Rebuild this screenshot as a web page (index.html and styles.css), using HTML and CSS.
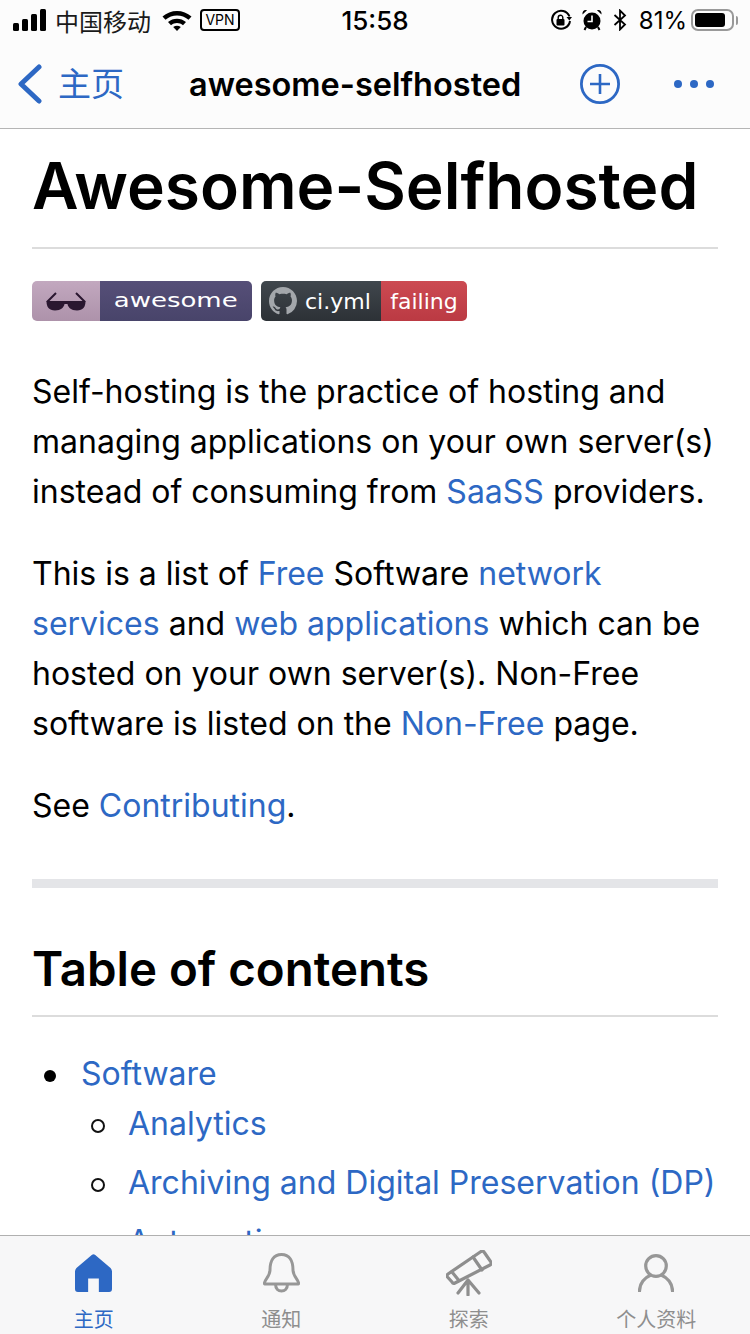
FILE: index.html
```html
<!DOCTYPE html>
<html lang="en">

<head>
    <meta charset="UTF-8">
    <meta name="viewport" content="width=device-width, initial-scale=1.0">
    <title>awesome-selfhosted</title>
    <link rel="stylesheet" href="styles.css">
</head>

<body>
    <div class="phone">
        <div class="status-bar">
            <div class="status-left">
                <svg class="signal" width="34" height="22" viewBox="0 0 34 22">
                    <rect x="0" y="14" width="6" height="8" rx="1.5" />
                    <rect x="9" y="10" width="6" height="12" rx="1.5" />
                    <rect x="18" y="5" width="6" height="17" rx="1.5" />
                    <rect x="27" y="0" width="6" height="22" rx="1.5" />
                </svg>
                <span class="carrier">中国移动</span>
                <svg class="wifi" width="30" height="22" viewBox="0 0 30 22">
                    <path d="M0.5 7.500C8.500 0 21.500 0 29.500 7.500L26.500 10.800C20 5 10 5 3.500 10.800Z" />
                    <path d="M6 13C11 8.500 19 8.500 24 13L21 16.200C17.500 13.200 12.500 13.200 9 16.200Z" />
                    <path d="M11.200 18C13.500 16.200 16.500 16.200 18.800 18L15 22Z" />
                </svg>
                <span class="vpn">VPN</span>
            </div>
            <div class="status-time">15:58</div>
            <div class="status-right">
                <svg class="icon-rotate" width="22" height="22" viewBox="0 0 22 22" fill="none" stroke="#000" stroke-width="2">
                    <path d="M19.500 7.500A9 9 0 1 0 20 12" />
                    <path d="M16.500 8h5.500l-2.700 3.500z" fill="#000" stroke="none" />
                    <rect x="6.500" y="10" width="8" height="6.500" rx="1" fill="#000" stroke="none" />
                    <path d="M8.200 10V8.500a2.300 2.300 0 0 1 4.600 0V10" stroke-width="1.400" />
                </svg>
                <svg class="icon-alarm" width="20" height="22" viewBox="0 0 20 22">
                    <circle cx="10" cy="12" r="8.500" />
                    <path d="M10 6.500V12.500H5.500" fill="none" stroke="#fff" stroke-width="1.600" />
                    <path d="M0.500 5.500L5 1.200C2.200 .2 0 2.500 .5 5.500ZM19.500 5.500L15 1.200C17.800 .2 20 2.500 19.500 5.500Z" />
                    <path d="M4 18L2.500 21M16 18L17.500 21" stroke="#000" stroke-width="2" />
                </svg>
                <svg class="icon-bluetooth" width="14" height="22" viewBox="0 0 14 22" fill="none" stroke="#000" stroke-width="1.800">
                    <path d="M1.500 6L12 15.500L7 20.500V1.500L12 6.500L1.500 16" />
                </svg>
                <span class="battery-pct">81%</span>
                <div class="battery">
                    <div class="battery-level"></div>
                </div>
                <div class="battery-cap"></div>
            </div>
        </div>

        <div class="nav-bar">
            <svg class="nav-back" width="26" height="40" viewBox="0 0 26 40" fill="none" stroke="#2d68c4" stroke-width="5" stroke-linecap="round" stroke-linejoin="round">
                <path d="M22 3L4 20L22 37" />
            </svg>
            <span class="nav-back-label">主页</span>
            <span class="nav-title">awesome-selfhosted</span>
            <svg class="nav-plus" width="40" height="40" viewBox="0 0 40 40" fill="none" stroke="#2d68c4">
                <circle cx="20" cy="20" r="18.600" stroke-width="2.800" />
                <path d="M20 10V30M10 20H30" stroke-width="2.600" />
            </svg>
            <div class="nav-more">
                <span></span>
                <span></span>
                <span></span>
            </div>
        </div>

        <div class="content">
            <h1>Awesome-Selfhosted</h1>
            <div class="badges">
                <div class="badge">
                    <span class="badge-glasses">
                        <svg width="40" height="20" viewBox="0 0 40 20" fill="#2a1730">
                            <path d="M0.500 10H39.500C39.500 16 37 19.500 31 19.500C25 19.500 22 16 21.500 13H18.500C18 16 15 19.500 9 19.500C3 19.500 .5 16 .5 10Z" />
                            <path d="M1 11L10 2M39 11L30 2" fill="none" stroke="#2a1730" stroke-width="2" />
                        </svg>
                    </span>
                    <span class="badge-awesome"><span class="awesome-text">awesome</span></span>
                </div>
                <div class="badge">
                    <span class="badge-ci">
                        <svg width="28" height="28" viewBox="0 0 16 16" fill="#a3a7ab">
                            <path d="M8 0C3.58 0 0 3.58 0 8c0 3.54 2.29 6.53 5.47 7.59.4.07.55-.17.55-.38 0-.19-.01-.82-.01-1.49-2.01.37-2.53-.49-2.69-.94-.09-.23-.48-.94-.82-1.13-.28-.15-.68-.52-.01-.53.63-.01 1.08.58 1.23.82.72 1.21 1.87.87 2.33.66.07-.52.28-.87.51-1.07-1.78-.2-3.64-.89-3.64-3.95 0-.87.31-1.59.82-2.15-.08-.2-.36-1.02.08-2.12 0 0 .67-.21 2.2.82.64-.18 1.32-.27 2-.27.68 0 1.36.09 2 .27 1.53-1.04 2.2-.82 2.2-.82.44 1.1.16 1.92.08 2.12.51.56.82 1.27.82 2.15 0 3.07-1.87 3.75-3.65 3.95.29.25.54.73.54 1.48 0 1.07-.01 1.93-.01 2.2 0 .21.15.46.55.38A8.013 8.013 0 0016 8c0-4.42-3.58-8-8-8z" />
                        </svg>
                        ci.yml
                    </span>
                    <span class="badge-failing">failing</span>
                </div>
            </div>
            <p>Self-hosting is the practice of hosting and managing applications on your own server(s) instead of consuming from <a href="#">SaaSS</a> providers.</p>
            <p>This is a list of <a href="#">Free</a> Software <a href="#">network services</a> and <a href="#">web applications</a> which can be hosted on your own server(s). Non-Free software is listed on the <a href="#">Non-Free</a> page.</p>
            <p>See <a href="#">Contributing</a>.</p>
            <hr>
            <h2>Table of contents</h2>
            <ul class="toc">
                <li><a href="#">Software</a>
                    <ul>
                        <li><a href="#">Analytics</a></li>
                        <li><a href="#">Archiving and Digital Preservation (DP)</a></li>
                        <li><a href="#">Automation</a></li>
                    </ul>
                </li>
            </ul>
        </div>

        <div class="tab-bar">
            <div class="tab tab-active">
                <div class="tab-icon tab-icon-home">
                    <svg width="37" height="38" viewBox="0 0 38 38" preserveAspectRatio="none" fill="#2d68c4">
                        <path d="M17.500 .8Q19 -.2 20.500 .8L36.500 14Q38 15.500 38 17.500V35Q38 38 35 38H24.500V24.500H13.500V38H3Q0 38 0 35V17.500Q0 15.500 1.500 14Z" />
                    </svg>
                </div>
                <span>主页</span>
            </div>
            <div class="tab">
                <div class="tab-icon">
                    <svg width="37" height="40" viewBox="0 0 37 40" fill="none" stroke="#979797" stroke-width="3" stroke-linejoin="round">
                        <path d="M7 17C7 8 10.500 1.500 18.500 1.500C26.500 1.500 30 8 30 17C30 24 36.500 27 35.500 31H1.500C.5 27 7 24 7 17Z" />
                        <path d="M12.500 31C12.500 36 15.500 38 18.500 38C21.500 38 24.500 36 24.500 31" />
                    </svg>
                </div>
                <span>通知</span>
            </div>
            <div class="tab">
                <div class="tab-icon">
                    <svg width="46" height="46" viewBox="0 0 46 46" fill="none" stroke="#8e8e8e" stroke-width="3.200" stroke-linejoin="round" stroke-linecap="round">
                        <path d="M2 24L35 1.500Q37 .5 38 2L45 12Q46 14 44 15L9 33Q7 34 6 32L1.500 27Q.5 25 2 24Z" />
                        <path d="M6 22L12.500 30M27 7L36 20" />
                        <path d="M22 30V45M22 30L12 43M22 30L33 43" />
                    </svg>
                </div>
                <span>探索</span>
            </div>
            <div class="tab">
                <div class="tab-icon">
                    <svg width="36" height="38" viewBox="0 0 36 38" fill="none" stroke="#979797" stroke-width="3.200" stroke-linecap="round">
                        <circle cx="18" cy="12" r="10.300" />
                        <path d="M1.500 37C1.500 29 7 23.500 12 21.500M34.500 37C34.500 29 29 23.500 24 21.500" />
                    </svg>
                </div>
                <span>个人资料</span>
            </div>
        </div>
    </div>
</body>

</html>
```

FILE: styles.css
```css
html,
body {
    margin: 0;
    padding: 0;
}

body {
    font-family: Inter, "Noto Sans CJK SC", sans-serif;
    color: #000;
    background-color: #fff;
}

.phone {
    width: 750px;
    height: 1334px;
    display: flex;
    flex-direction: column;
    overflow: hidden;
}

.status-bar {
    height: 40px;
    flex-shrink: 0;
    display: grid;
    grid-template-columns: 1fr auto 1fr;
    align-items: center;
    padding: 0 12px;
    background-color: #fcfcfc;
}

.status-left,
.status-right {
    display: flex;
    align-items: center;
}

.status-right {
    justify-content: flex-end;
}

.status-left svg {
    fill: #000;
}

.signal {
    margin-left: 1px;
}

.carrier {
    margin-left: 8px;
    font-size: 24px;
    color: #1a1a1a;
}

.wifi {
    margin-left: 11px;
}

.vpn {
    margin-left: 8px;
    width: 36px;
    height: 18px;
    line-height: 18px;
    border: 2px solid #000;
    border-radius: 4px;
    font-size: 14px;
    text-align: center;
}

.status-time {
    font-size: 26px;
    font-weight: 500;
}

.icon-alarm {
    margin-left: 10px;
}

.icon-bluetooth {
    margin-left: 11px;
}

.battery-pct {
    margin-left: 12px;
    font-size: 24px;
}

.battery {
    width: 35px;
    height: 14px;
    padding: 2px;
    margin-left: 4px;
    border: 2px solid #999;
    border-radius: 7px;
}

.battery-level {
    width: 30px;
    height: 14px;
    background-color: #000;
    border-radius: 3px;
}

.battery-cap {
    width: 2px;
    height: 9px;
    margin-left: 2px;
    background-color: #999;
    border-radius: 0 2px 2px 0;
}

.nav-bar {
    height: 88px;
    flex-shrink: 0;
    display: flex;
    align-items: center;
    background-color: #fcfcfc;
    border-bottom: 1px solid #b5b5b5;
}

.nav-back {
    margin-left: 17px;
}

.nav-back-label {
    margin: 0 0 4px 15px;
    font-size: 33px;
    color: #2d68c4;
}

.nav-title {
    margin-left: 65px;
    font-size: 32.500px;
    font-weight: 600;
}

.nav-plus {
    margin-left: 59px;
}

.nav-more {
    margin-left: 54px;
    display: flex;
    gap: 8px;
}

.nav-more span {
    width: 8px;
    height: 8px;
    border-radius: 50%;
    background-color: #2d68c4;
}

.content {
    flex: 1;
    min-height: 0;
    overflow: hidden;
    padding: 0 32px;
    font-size: 32px;
    line-height: 50px;
}

a {
    color: #2d68c4;
    text-decoration: none;
}

h1 {
    margin: 15px 0 32px;
    padding-bottom: 19px;
    border-bottom: 2px solid #dcdcdc;
    font-size: 64px;
    line-height: 84px;
    font-weight: 600;
}

h2 {
    margin: 51px 0 32px;
    padding-bottom: 16px;
    border-bottom: 2px solid #dcdcdc;
    font-size: 47.400px;
    line-height: 60px;
    font-weight: 600;
}

p {
    margin: 0 0 32px;
}

hr {
    height: 9px;
    margin: 48px 0 0;
    border: 0;
    background-color: #e4e5e8;
}

.badges {
    display: flex;
    gap: 9px;
    margin-bottom: 46px;
}

.badge {
    display: flex;
    height: 40px;
    border-radius: 5px;
    overflow: hidden;
    color: #fff;
}

.badge-glasses {
    width: 68px;
    display: flex;
    align-items: center;
    justify-content: center;
    background: linear-gradient(#c2a8bf, #ad92aa);
}

.badge-awesome {
    width: 152px;
    background: linear-gradient(#564f78, #48446a);
    font-family: "DejaVu Sans", sans-serif;
    font-size: 20px;
    line-height: 38px;
    text-align: center;
}

.awesome-text {
    display: inline-block;
    transform: scaleX(1.3);
}

.badge-ci {
    width: 120px;
    display: flex;
    align-items: center;
    gap: 8px;
    padding: 2px 0 0 8px;
    box-sizing: border-box;
    background: linear-gradient(#40474d, #2c3136);
    font-family: "DejaVu Sans", sans-serif;
    font-size: 22px;
}

.badge-ci svg {
    margin-bottom: 2px;
}

.badge-failing {
    width: 86px;
    background: linear-gradient(#cc4a52, #bb3a43);
    font-family: "DejaVu Sans", sans-serif;
    font-size: 22px;
    line-height: 42px;
    text-align: center;
}

.toc {
    margin: 0;
    padding-left: 49px;
    list-style: none;
}

.toc ul {
    margin: 0;
    padding-left: 47px;
    list-style: none;
}

.toc ul li {
    margin-bottom: 9px;
}

.toc > li::before {
    content: "";
    display: inline-block;
    width: 12px;
    height: 12px;
    margin: 0 25px 0 -37px;
    border-radius: 50%;
    background-color: #000;
    vertical-align: middle;
}

.toc ul li::before {
    content: "";
    display: inline-block;
    width: 14px;
    height: 14px;
    margin: 0 23px 0 -37px;
    box-sizing: border-box;
    border: 2.500px solid #111;
    border-radius: 50%;
    vertical-align: middle;
}

.tab-bar {
    height: 98px;
    flex-shrink: 0;
    display: grid;
    grid-template-columns: repeat(4, 1fr);
    background-color: #f7f7f8;
    border-top: 1px solid #b0b0b0;
}

.tab {
    display: flex;
    flex-direction: column;
    align-items: center;
    gap: 16px;
    padding-top: 18px;
    font-size: 20px;
    line-height: 24px;
    color: #8e8e8e;
}

.tab-icon {
    height: 38px;
    display: flex;
    align-items: center;
    justify-content: center;
}

.tab-icon-home {
    margin-right: 1px;
}

.tab-active {
    color: #2d68c4;
}
```
